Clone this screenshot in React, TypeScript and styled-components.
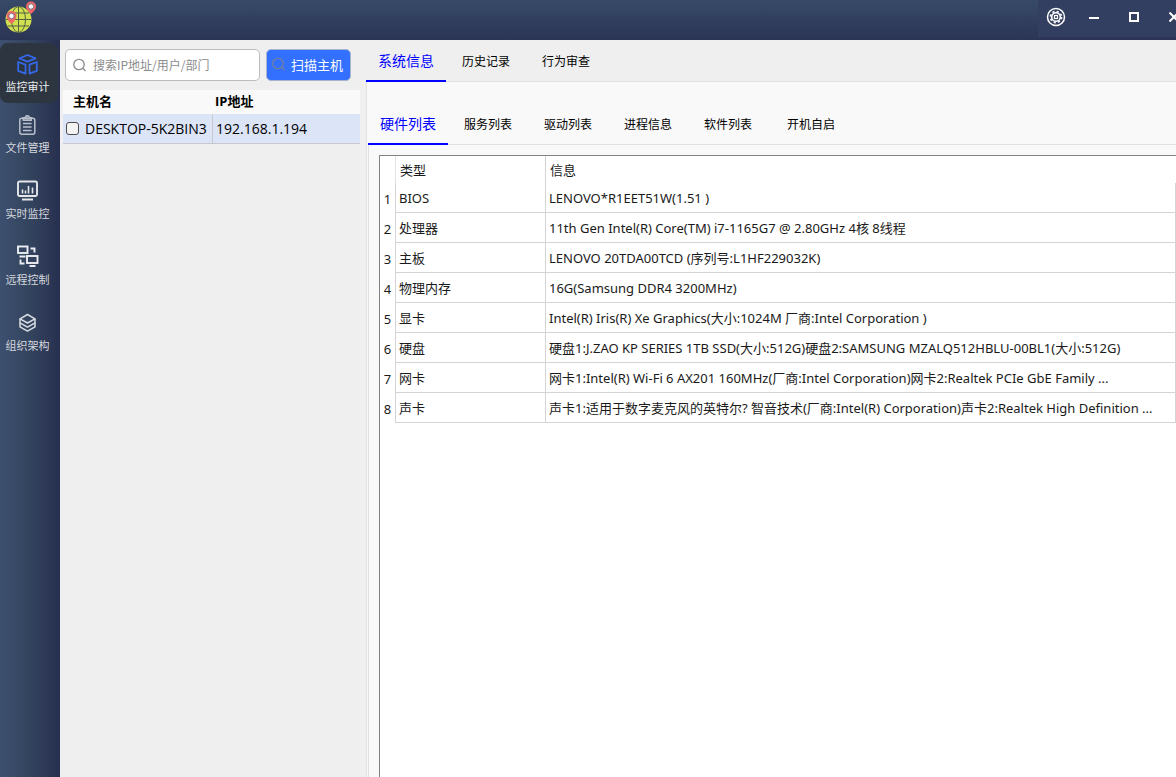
import React from "react";
import styled, { createGlobalStyle, css } from "styled-components";

const GlobalStyle = createGlobalStyle`
  * { box-sizing: border-box; }
  body {
    margin: 0;
    background: #efefef;
    color: #1a1a1a;
    font-family: "Open Sans", "Noto Sans CJK SC", sans-serif;
    font-size: 13px;
    overflow: hidden;
  }
  button, input { font-family: inherit; margin: 0; }
  button { border: 0; padding: 0; background: none; color: inherit; cursor: pointer; }
  svg { display: block; flex: none; }
`;

const Window = styled.div`
  display: flex;
  flex-direction: column;
  min-height: 100vh;
`;

const TitleBar = styled.header`
  display: flex;
  justify-content: space-between;
  align-items: flex-start;
  height: 40px;
  padding-left: 4px;
  background: linear-gradient(#384a69, #2b3455);
`;

const WindowControls = styled.div`
  display: flex;
  width: 138px;
  height: 37px;
  overflow: hidden;
  background: #333f60;
`;

const ControlButton = styled.button<{ $wide?: boolean }>`
  display: flex;
  flex: none;
  align-items: center;
  justify-content: center;
  width: ${(p) => (p.$wide ? 40 : 36)}px;
  height: 34px;
`;

const Body = styled.div`
  display: flex;
  flex: 1;
`;

const Sidebar = styled.nav`
  display: flex;
  flex: none;
  flex-direction: column;
  gap: 6px;
  width: 60px;
  padding: 3px 2px 0 0;
  background: linear-gradient(to right, #3d506f, #34455f 45%, #2e3a58 75%, #27304e);
`;

const NavButton = styled.button<{ $active?: boolean }>`
  display: flex;
  flex-direction: column;
  align-items: center;
  justify-content: flex-end;
  gap: 2px;
  width: 58px;
  height: 60px;
  padding: 0 3px 8px 0;
  border-radius: 8px;
  color: #d5d8de;
  font-size: 11px;
  line-height: 16px;
  ${(p) =>
    p.$active &&
    css`
      margin-bottom: -5px;
      background: #2c3540;
      color: #eceef0;
    `}
`;

const NavIcon = styled.span`
  display: flex;
  align-items: center;
  height: 26px;
`;

const HostPanel = styled.aside`
  flex: none;
  width: 306px;
  padding: 9px 6px 0 3px;
`;

const SearchRow = styled.div`
  display: flex;
  gap: 6px;
  padding: 0 9px 0 2px;
`;

const SearchBox = styled.label`
  display: flex;
  flex: 1;
  align-items: center;
  gap: 6px;
  min-width: 0;
  height: 32px;
  padding: 0 7px;
  border: 1px solid #bcbcbc;
  border-radius: 5px;
  background: #fff;
`;

const SearchInput = styled.input`
  flex: 1;
  min-width: 0;
  padding: 0 0 2px;
  border: 0;
  outline: 0;
  background: none;
  font-family: "Noto Sans CJK SC", sans-serif;
  font-size: 12px;
  &::placeholder { color: #8c8c8c; opacity: 1; }
`;

const ScanButton = styled.button`
  display: flex;
  align-items: center;
  gap: 5px;
  width: 85px;
  height: 32px;
  padding: 0 5px 2px;
  border: 1px solid #a9b4cf;
  border-radius: 5px;
  background: #3370ff;
  color: #fff;
  font-size: 13px;
  white-space: nowrap;
`;

const HostTable = styled.table`
  width: 100%;
  margin-top: 9px;
  border-collapse: separate;
  border-spacing: 0;
  table-layout: fixed;
`;

const HostHead = styled.th`
  height: 24px;
  padding: 0 0 2px 10px;
  background: #f9f9f9;
  color: #000;
  font-size: 13px;
  line-height: 18px;
  text-align: left;
  &:first-child { width: 150px; }
  & + & { padding-left: 2px; }
`;

const HostCell = styled.td`
  height: 30px;
  padding: 0 3px;
  border-bottom: 1px solid #c6c8cc;
  background: #dce4f8;
  color: #000;
  font-size: 14px;
  line-height: 20px;
  white-space: nowrap;
  &:first-child { border-right: 1px solid #c6c8cc; }
`;

const HostLabel = styled.label`
  display: flex;
  align-items: center;
  gap: 6px;
`;

const CheckBox = styled.input`
  appearance: none;
  flex: none;
  width: 13px;
  height: 13px;
  border: 1px solid #4c4c4c;
  border-radius: 3px;
  background: #f3f3f3;
  &:checked { background: #3370ff; }
`;

const Main = styled.main`
  display: flex;
  flex: 1;
  flex-direction: column;
  min-width: 0;
`;

const TabList = styled.div<{ $height: number }>`
  display: flex;
  height: ${(p) => p.$height}px;
  border-bottom: 1px solid #e1e1e1;
`;

const TabButton = styled.button<{ $active?: boolean; $last?: boolean }>`
  align-self: flex-end;
  width: ${(p) => (p.$last ? 86 : 80)}px;
  height: 42px;
  margin-bottom: -1px;
  padding-top: ${(p) => (p.$active ? 2 : 4)}px;
  border-bottom: 2px solid ${(p) => (p.$active ? "#0000ff" : "transparent")};
  color: ${(p) => (p.$active ? "#0000ff" : "#000")};
  font-size: ${(p) => (p.$active ? 14 : 12)}px;
  line-height: 20px;
`;

const Pane = styled.section<{ $inner?: boolean }>`
  display: flex;
  flex: 1;
  flex-direction: column;
  border-left: 1px solid #e1e1e1;
  background: #f9f9f9;
  padding: ${(p) => (p.$inner ? "10px 0 0 10px" : "0 0 0 1px")};
`;

const Sheet = styled.div`
  flex: 1;
  border: solid #828282;
  border-width: 1px 0 0 1px;
  background: #fff;
`;

const InfoTable = styled.table`
  width: 100%;
  border-collapse: separate;
  border-spacing: 0;
  table-layout: fixed;
  font-family: "Noto Sans", "Noto Sans CJK SC", sans-serif;
`;

const IndexCell = styled.th`
  width: 16px;
  height: 30px;
  padding: 2px 0 0;
  border-right: 1px solid #d4d4d4;
  font-size: 13px;
  font-weight: 400;
  line-height: 18px;
  text-align: center;
`;

const InfoHead = styled.th<{ $type?: boolean }>`
  width: ${(p) => (p.$type ? "150px" : "auto")};
  height: 27px;
  padding: 0 4px;
  border-right: ${(p) => (p.$type ? "1px solid #d4d4d4" : "0")};
  font-weight: 400;
  line-height: 18px;
  text-align: left;
`;

const CornerHead = styled.td`
  width: 16px;
  height: 27px;
  padding: 0;
  border-right: 1px solid #e4e4e4;
`;

const InfoCell = styled.td`
  height: 30px;
  padding: 0 3px;
  border: solid #d4d4d4;
  border-width: 0 1px 1px 0;
  line-height: 18px;
  overflow: hidden;
  white-space: nowrap;
`;

const LogoIcon = () => (
  <svg width="34" height="34" viewBox="0 0 34 34" aria-hidden="true">
    <circle cx="14.500" cy="19.500" r="13" fill="#d0e04e" />
    <g fill="none" stroke="#526044" strokeWidth="1">
      <ellipse cx="14.500" cy="19.500" rx="7" ry="13" />
      <path d="M14.500 6.500v26M1.500 19.500h26M4 13h21M4 26h21" />
    </g>
    <path d="M7.500 24c-3-3-5-5-5-8a5 5 0 0 1 10 0c0 3-2 5-5 8z" fill="#f06868" />
    <circle cx="7.500" cy="16" r="2.700" fill="#fff" stroke="#4b5268" strokeWidth=".7" />
    <path d="M27 14c-3-3-5-4.500-5-7.500a5 5 0 0 1 10 0c0 3-2 4.500-5 7.500z" fill="#f06868" />
    <circle cx="27" cy="6.500" r="2.700" fill="#fff" stroke="#4b5268" strokeWidth=".7" />
  </svg>
);

const GearIcon = () => (
  <svg width="20" height="20" viewBox="0 0 20 20" fill="none" stroke="#fff" aria-hidden="true">
    <circle cx="10" cy="10" r="8.500" strokeWidth="1.500" />
    <circle cx="10" cy="10" r="4.300" strokeWidth="1.600" />
    <circle cx="10" cy="10" r="5.600" strokeWidth="1.600" strokeDasharray="2.200 2.198" />
    <rect x="8.500" y="8.500" width="3" height="3" strokeWidth="1.200" />
  </svg>
);

const MinimizeIcon = () => (
  <svg width="10" height="10" aria-hidden="true"><path d="M0 6h10" stroke="#fff" strokeWidth="2" /></svg>
);
const MaximizeIcon = () => (
  <svg width="10" height="10" aria-hidden="true"><path d="M1 1h8v8h-8z" fill="none" stroke="#fff" strokeWidth="2" /></svg>
);
const CloseIcon = () => (
  <svg width="10" height="10" aria-hidden="true"><path d="M.5 .5l9 9M9.500 .5l-9 9" stroke="#fff" strokeWidth="2" /></svg>
);

const SearchIcon = ({ color }: { color: string }) => (
  <svg width="14" height="14" viewBox="0 0 14 14" fill="none" stroke={color} strokeWidth="1.300" aria-hidden="true">
    <circle cx="6" cy="6.500" r="5.200" />
    <path d="M9.800 10.300l2.700 2.700" />
  </svg>
);

const CubeIcon = () => (
  <svg width="22" height="22" viewBox="0 0 22 22" fill="none" stroke="#3568e8" strokeWidth="1.800" strokeLinejoin="round" aria-hidden="true">
    <path d="M10.500 2l8 3.300-8 3.300-8-3.300z" />
    <path d="M1.200 9l7.300 2.600v9l-7.300-2.800z" />
    <path d="M19.800 9l-7.300 2.600v9l7.300-2.800z" />
  </svg>
);

const ClipboardIcon = () => (
  <svg width="18" height="20" viewBox="0 0 18 20" fill="none" stroke="#b9bfca" strokeWidth="1.500" aria-hidden="true">
    <rect x=".8" y="3.200" width="15" height="16" rx="2" />
    <path d="M4.300 2.700h2a2 2 0 0 1 4 0h2v2.500h-8z" fill="#b9bfca" fillOpacity=".5" />
    <path d="M4 8.500h8.600M4 12h8.600M4 15.500h8.600" />
  </svg>
);

const MonitorIcon = () => (
  <svg width="22" height="22" viewBox="0 0 22 22" fill="none" stroke="#e4e6ea" strokeWidth="1.900" aria-hidden="true">
    <rect x="1" y="1.500" width="19" height="14.500" rx="1.500" />
    <path d="M5.500 9.500v4M8.500 10.500v3M11.500 6v7.500M15.500 7.500v6" strokeWidth="1.600" />
    <path d="M5 19.500h11" strokeWidth="2" />
  </svg>
);

const RemoteIcon = () => (
  <svg width="22" height="25" viewBox="0 0 22 25" fill="none" stroke="#eceef1" strokeWidth="1.900" aria-hidden="true">
    <rect x="1" y="1.500" width="9.500" height="6.500" />
    <path d="M2.500 11.500h6M13.500 3.500h4v4M3.500 14.500v4h4M12.500 21h6" />
    <rect x="10" y="11" width="10.500" height="7" />
  </svg>
);

const LayersIcon = () => (
  <svg width="18" height="20" viewBox="0 0 18 20" fill="none" stroke="#d9dce2" strokeWidth="1.500" strokeLinejoin="round" aria-hidden="true">
    <path d="M8.500 1.500l7.500 4.300-7.500 4.200-7.500-4.200z" />
    <path d="M1 5.800v8l7.500 4.300 7.500-4.300v-8" />
    <path d="M1 9.800l7.500 4.300 7.500-4.300" />
  </svg>
);

const navItems = [
  { label: "监控审计", icon: <CubeIcon />, active: true },
  { label: "文件管理", icon: <ClipboardIcon /> },
  { label: "实时监控", icon: <MonitorIcon /> },
  { label: "远程控制", icon: <RemoteIcon /> },
  { label: "组织架构", icon: <LayersIcon /> },
];

const mainTabs = ["系统信息", "历史记录", "行为审查"];
const infoTabs = ["硬件列表", "服务列表", "驱动列表", "进程信息", "软件列表", "开机自启"];

const hardware = [
  ["BIOS", "LENOVO*R1EET51W(1.51 )"],
  ["处理器", "11th Gen Intel(R) Core(TM) i7-1165G7 @ 2.80GHz 4核 8线程"],
  ["主板", "LENOVO 20TDA00TCD (序列号:L1HF229032K)"],
  ["物理内存", "16G(Samsung DDR4 3200MHz)"],
  ["显卡", "Intel(R) Iris(R) Xe Graphics(大小:1024M 厂商:Intel Corporation )"],
  ["硬盘", "硬盘1:J.ZAO KP SERIES 1TB SSD(大小:512G)硬盘2:SAMSUNG MZALQ512HBLU-00BL1(大小:512G)"],
  ["网卡", "网卡1:Intel(R) Wi-Fi 6 AX201 160MHz(厂商:Intel Corporation)网卡2:Realtek PCIe GbE Family ..."],
  ["声卡", "声卡1:适用于数字麦克风的英特尔? 智音技术(厂商:Intel(R) Corporation)声卡2:Realtek High Definition ..."],
];

export default function App() {
  return (
    <Window>
      <GlobalStyle />
      <TitleBar>
        <LogoIcon />
        <WindowControls>
          <ControlButton aria-label="设置"><GearIcon /></ControlButton>
          <ControlButton $wide aria-label="最小化"><MinimizeIcon /></ControlButton>
          <ControlButton $wide aria-label="最大化"><MaximizeIcon /></ControlButton>
          <ControlButton $wide aria-label="关闭"><CloseIcon /></ControlButton>
        </WindowControls>
      </TitleBar>
      <Body>
        <Sidebar>
          {navItems.map((item) => (
            <NavButton key={item.label} $active={item.active}>
              <NavIcon>{item.icon}</NavIcon>
              {item.label}
            </NavButton>
          ))}
        </Sidebar>
        <HostPanel>
          <SearchRow>
            <SearchBox>
              <SearchIcon color="#8c8c8c" />
              <SearchInput type="text" aria-label="搜索" placeholder="搜索IP地址/用户/部门" />
            </SearchBox>
            <ScanButton>
              <SearchIcon color="#72809c" />
              扫描主机
            </ScanButton>
          </SearchRow>
          <HostTable>
            <thead>
              <tr>
                <HostHead>主机名</HostHead>
                <HostHead>IP地址</HostHead>
              </tr>
            </thead>
            <tbody>
              <tr>
                <HostCell>
                  <HostLabel>
                    <CheckBox type="checkbox" />
                    DESKTOP-5K2BIN3
                  </HostLabel>
                </HostCell>
                <HostCell>192.168.1.194</HostCell>
              </tr>
            </tbody>
          </HostTable>
        </HostPanel>
        <Main>
          <TabList $height={42} role="tablist">
            {mainTabs.map((tab, i) => (
              <TabButton key={tab} role="tab" aria-selected={i === 0} $active={i === 0}>{tab}</TabButton>
            ))}
          </TabList>
          <Pane>
            <TabList $height={63} role="tablist">
              {infoTabs.map((tab, i) => (
                <TabButton
                  key={tab}
                  role="tab"
                  aria-selected={i === 0}
                  $active={i === 0}
                  $last={i === infoTabs.length - 1}
                >
                  {tab}
                </TabButton>
              ))}
            </TabList>
            <Pane $inner>
              <Sheet>
                <InfoTable>
                  <thead>
                    <tr>
                      <CornerHead />
                      <InfoHead $type>类型</InfoHead>
                      <InfoHead>信息</InfoHead>
                    </tr>
                  </thead>
                  <tbody>
                    {hardware.map(([type, info], i) => (
                      <tr key={type}>
                        <IndexCell scope="row">{i + 1}</IndexCell>
                        <InfoCell>{type}</InfoCell>
                        <InfoCell>{info}</InfoCell>
                      </tr>
                    ))}
                  </tbody>
                </InfoTable>
              </Sheet>
            </Pane>
          </Pane>
        </Main>
      </Body>
    </Window>
  );
}
